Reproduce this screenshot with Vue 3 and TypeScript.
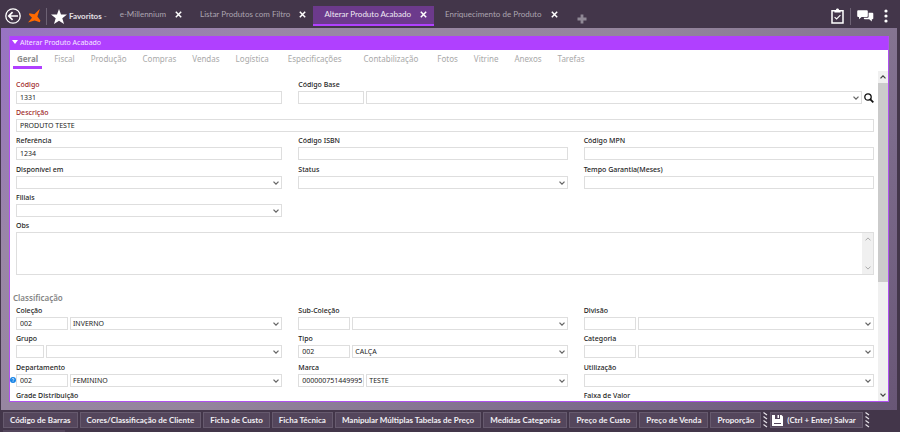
<script setup lang="ts">
import { ref } from 'vue'

interface Field {
  id: string
  label: string
  kind: 'text' | 'select' | 'lookup'
  value?: string
  code?: string
  size?: 'small' | 'medium' | 'large' | 'base'
  required?: boolean
  help?: boolean
  search?: boolean
  span?: 'two' | 'all' | 'break'
}

const openTabs = ['e-Millennium', 'Listar Produtos com Filtro', 'Alterar Produto Acabado', 'Enriquecimento de Produto']
const activeTab = ref('Alterar Produto Acabado')

const sections = [
  { name: 'Geral' },
  { name: 'Fiscal' },
  { name: 'Produção' },
  { name: 'Compras' },
  { name: 'Vendas' },
  { name: 'Logística' },
  { name: 'Especificações', wide: true },
  { name: 'Contabilização', wide: true },
  { name: 'Fotos' },
  { name: 'Vitrine' },
  { name: 'Anexos' },
  { name: 'Tarefas' },
]
const activeSection = ref('Geral')

const general: Field[] = [
  { id: 'codigo', label: 'Código', kind: 'text', value: '1331', required: true },
  { id: 'codigo-base', label: 'Código Base', kind: 'lookup', code: '', value: '', size: 'base', search: true, span: 'two' },
  { id: 'descricao', label: 'Descrição', kind: 'text', value: 'PRODUTO TESTE', required: true, span: 'all' },
  { id: 'referencia', label: 'Referência', kind: 'text', value: '1234' },
  { id: 'isbn', label: 'Código ISBN', kind: 'text', value: '' },
  { id: 'mpn', label: 'Código MPN', kind: 'text', value: '' },
  { id: 'disponivel', label: 'Disponível em', kind: 'select', value: '' },
  { id: 'status', label: 'Status', kind: 'select', value: '' },
  { id: 'garantia', label: 'Tempo Garantia(Meses)', kind: 'text', value: '' },
  { id: 'filiais', label: 'Filiais', kind: 'select', value: '', span: 'break' },
]

const classification: Field[] = [
  { id: 'colecao', label: 'Coleção', kind: 'lookup', code: '002', value: 'INVERNO', size: 'medium' },
  { id: 'subcolecao', label: 'Sub-Coleção', kind: 'lookup', code: '', value: '', size: 'medium' },
  { id: 'divisao', label: 'Divisão', kind: 'lookup', code: '', value: '', size: 'medium' },
  { id: 'grupo', label: 'Grupo', kind: 'lookup', code: '', value: '', size: 'small' },
  { id: 'tipo', label: 'Tipo', kind: 'lookup', code: '002', value: 'CALÇA', size: 'medium' },
  { id: 'categoria', label: 'Categoria', kind: 'lookup', code: '', value: '', size: 'medium' },
  { id: 'departamento', label: 'Departamento', kind: 'lookup', code: '002', value: 'FEMININO', size: 'medium', help: true },
  { id: 'marca', label: 'Marca', kind: 'lookup', code: '000000751449995', value: 'TESTE', size: 'large' },
  { id: 'utilizacao', label: 'Utilização', kind: 'select', value: '' },
  { id: 'grade', label: 'Grade Distribuição', kind: 'select', value: '', span: 'two' },
  { id: 'faixa', label: 'Faixa de Valor', kind: 'select', value: '' },
]

const groups = [
  { name: 'geral', fields: general },
  { name: 'classificacao', title: 'Classificação', fields: classification },
]

const actions = [
  'Código de Barras',
  'Cores/Classificação de Cliente',
  'Ficha de Custo',
  'Ficha Técnica',
  'Manipular Múltiplas Tabelas de Preço',
  'Medidas Categorias',
  'Preço de Custo',
  'Preço de Venda',
  'Proporção',
]
</script>

<template>
  <div class="app">
    <header class="topbar">
      <button class="icon-btn back" aria-label="Voltar">
        <svg width="16" height="16" viewBox="0 0 16 16" fill="none" stroke="#fff">
          <circle cx="8" cy="8" r="7.2" stroke-width="1.3" />
          <path d="M13 8H4M7.6 4.2 3.8 8l3.8 3.8" stroke-width="1.7" />
        </svg>
      </button>
      <svg class="logo" width="13" height="14" viewBox="0 0 13 14" fill="#ff6a00">
        <path d="M11.8 0 9.4 7.4 12.4 11.4 11.8 13.2 6.6 11.4 0 13.5 4 8.8 1 5.8 1.4 4.2 6.4 5.2Z" />
      </svg>
      <span class="divider"></span>
      <button class="favorites">
        <svg width="16" height="15" viewBox="0 0 16 15" fill="#fff">
          <path d="M8 0 10 5.4 16 5.6 11.3 9.2 13 15 8 11.7 3 15 4.7 9.2 0 5.6 6 5.4Z" />
        </svg>
        <span>Favoritos <i>-</i></span>
      </button>
      <nav class="tabs">
        <div v-for="tab in openTabs" :key="tab" class="tab" :class="{ active: tab === activeTab }">
          <button class="tab-name" @click="activeTab = tab">{{ tab }}</button>
          <button class="icon-btn" :aria-label="'Fechar ' + tab">
            <svg width="7" height="7" viewBox="0 0 7 7" stroke="#fff" stroke-width="1.5">
              <path d="M.8.8 6.2 6.2M6.2.8.8 6.2" />
            </svg>
          </button>
        </div>
      </nav>
      <button class="icon-btn add" aria-label="Nova aba">
        <svg width="10" height="10" viewBox="0 0 10 10" fill="#8f8895">
          <path d="M3.6 0.5h2.8v3.1h3.1v2.8H6.4v3.1H3.6V6.4H.5V3.6h3.1Z" />
        </svg>
      </button>
      <div class="tools">
        <button class="icon-btn" aria-label="Tarefas">
          <svg width="13" height="16" viewBox="0 0 13 16" fill="none" stroke="#fff">
            <path d="M1 2.7h11v12.2H1Z" stroke-width="1.5" />
            <path d="M3.4 4.6V2.4h1.5C4.9-.2 8.1-.2 8.1 2.4h1.5v2.2Z" fill="#fff" stroke="none" />
            <path d="M3.6 9.2 5.6 11 9.4 7.2" stroke-width="1.1" />
          </svg>
        </button>
        <span class="divider"></span>
        <button class="icon-btn" aria-label="Mensagens">
          <svg width="17" height="12" viewBox="0 0 17 12" fill="#fff">
            <path d="M1.2.3h8.6q1 0 1 1V6q0 1-1 1H4.6L2 9.2V7H1.2q-1 0-1-1V1.3q0-1 1-1Z" />
            <path d="M11.6 2.8h3.7q1 0 1 1v4.5q0 1-1 1h-.5v2.2L12.2 9.3H7.8q-1 0-1-1V7.8h3.800q1 0 1-1Z" />
          </svg>
        </button>
        <button class="icon-btn" aria-label="Mais opções">
          <svg width="4" height="14" viewBox="0 0 4 14" fill="#fff">
            <circle cx="2" cy="2" r="1.6" />
            <circle cx="2" cy="7" r="1.6" />
            <circle cx="2" cy="12" r="1.6" />
          </svg>
        </button>
      </div>
    </header>

    <main class="workspace">
      <section class="window">
        <h1 class="window-title">
          <svg width="6" height="4" viewBox="0 0 6 4" fill="#fff"><path d="M0 0h6L3 4Z" /></svg>
          Alterar Produto Acabado
        </h1>
        <nav class="sections">
          <button
            v-for="section in sections"
            :key="section.name"
            :class="{ current: section.name === activeSection, wide: section.wide }"
            @click="activeSection = section.name"
          >
            {{ section.name }}
          </button>
        </nav>

        <div class="body">
          <form class="form" @submit.prevent>
            <template v-for="group in groups" :key="group.name">
              <h2 v-if="group.title" class="group-title">{{ group.title }}</h2>
              <div class="fields" :class="group.name">
                <div v-for="field in group.fields" :key="field.id" class="field" :class="field.span">
                  <label :for="field.id" :class="{ required: field.required }">{{ field.label }}</label>
                  <div class="control">
                    <svg v-if="field.help" class="help" width="6" height="6" viewBox="0 0 6 6">
                      <circle cx="3" cy="3" r="3" fill="#1583e6" />
                      <path d="M2 2.3Q2.1 1.4 3 1.4T4 2.3Q3.9 2.9 3 3.2V3.7M3 4.3v.7" fill="none" stroke="#fff" stroke-width=".7" />
                    </svg>
                    <input v-if="field.kind === 'text'" :id="field.id" type="text" :value="field.value" />
                    <template v-else>
                      <input
                        v-if="field.kind === 'lookup'"
                        :id="field.id"
                        type="text"
                        class="code"
                        :class="field.size"
                        :value="field.code"
                      />
                      <div class="combo">
                        <select
                          :id="field.kind === 'select' ? field.id : field.id + '-nome'"
                          :aria-label="field.label"
                        >
                          <option>{{ field.value }}</option>
                        </select>
                        <svg width="6" height="4" viewBox="0 0 6 4" fill="none" stroke="#666" stroke-width="1.3">
                          <path d="M.5.6 3 3.1 5.5.6" />
                        </svg>
                      </div>
                    </template>
                    <button v-if="field.search" type="button" class="icon-btn search" aria-label="Pesquisar">
                      <svg width="10" height="10" viewBox="0 0 10 10" fill="none" stroke="#111">
                        <circle cx="4" cy="4" r="3.2" stroke-width="1.3" />
                        <path d="M6.3 6.3 9.3 9.3" stroke-width="1.8" />
                      </svg>
                    </button>
                  </div>
                </div>
              </div>
              <div v-if="group.name === 'geral'" class="field notes">
                <label for="obs">Obs</label>
                <div class="notes-box">
                  <textarea id="obs"></textarea>
                  <div class="notes-bar">
                    <svg width="6" height="4" viewBox="0 0 6 4" fill="none" stroke="#aaa"><path d="M.5 3.4 3 .9 5.5 3.4" /></svg>
                    <svg width="6" height="4" viewBox="0 0 6 4" fill="none" stroke="#aaa"><path d="M.5.6 3 3.1 5.5.6" /></svg>
                  </div>
                </div>
              </div>
            </template>
          </form>
          <div class="scrollbar">
            <svg width="6" height="4" viewBox="0 0 6 4" fill="none" stroke="#444" stroke-width="1.3"><path d="M.5 3.4 3 .9 5.5 3.4" /></svg>
            <div class="track"><div class="thumb"></div></div>
            <svg width="6" height="4" viewBox="0 0 6 4" fill="none" stroke="#444" stroke-width="1.3"><path d="M.5.6 3 3.1 5.5.6" /></svg>
          </div>
        </div>
      </section>
    </main>

    <footer class="actions">
      <div class="action-row">
        <button v-for="action in actions" :key="action">{{ action }}</button>
        <svg class="grip" width="5" height="16" viewBox="0 0 5 16" stroke="#e6e2e8" fill="none">
          <path d="M.5.5l3.5 2.5M.5 4.5l3.5 2.5M.5 8.5l3.5 2.5M.5 12.5l3.5 2.5" stroke-width="1.2" />
        </svg>
        <button class="save">
          <svg width="11" height="11" viewBox="0 0 11 11" fill="#fff">
            <path d="M0 0h3v4h5V0h1.5L11 1.5V11H0Z" />
            <path d="M5.5 0H7v3H5.5Z" />
            <path d="M2 8.5h7" stroke="#54465c" />
          </svg>
          (Ctrl + Enter) Salvar
        </button>
        <svg class="grip" width="5" height="16" viewBox="0 0 5 16" stroke="#e6e2e8" fill="none">
          <path d="M.5.5l3.5 2.5M.5 4.5l3.5 2.5M.5 8.5l3.5 2.5M.5 12.5l3.5 2.5" stroke-width="1.2" />
        </svg>
      </div>
      <div class="next-row"></div>
    </footer>
  </div>
</template>

<style>
body {
  margin: 0;
  background: #43364a;
}
</style>

<style scoped>
.app {
  display: flex;
  flex-direction: column;
  height: 100vh;
  overflow: hidden;
  background: #43364a;
  font-family: 'Noto Sans', 'Open Sans', sans-serif;
  font-size: 7px;
  color: #1c1c1c;
}
.app * {
  box-sizing: border-box;
}
button,
input,
select,
textarea {
  font: inherit;
  color: inherit;
  margin: 0;
  padding: 0;
  border: 0;
  border-radius: 0;
  background: none;
  outline: none;
}
button {
  cursor: pointer;
  white-space: nowrap;
}
svg {
  display: block;
  flex: none;
}
.icon-btn {
  flex: none;
}

.topbar {
  flex: none;
  display: flex;
  align-items: center;
  height: 28px;
  padding: 4px 12px 0 5px;
  font-family: Lato, 'Noto Sans', sans-serif;
  font-size: 8px;
}
.logo {
  margin: 0 5px 0 7px;
}
.divider {
  flex: none;
  width: 1px;
  height: 17px;
  background: #6d6274;
}
.favorites {
  display: flex;
  align-items: center;
  gap: 2px;
  margin-left: 4px;
  font-weight: 700;
  color: #e4e0e6;
}
.favorites i {
  font-style: normal;
  color: #8f8895;
}
.tabs {
  display: flex;
  align-items: center;
  margin-left: 2px;
}
.tab {
  display: flex;
  align-items: center;
  gap: 9px;
  height: 20px;
  padding: 0 7px 2px 11px;
  border-bottom: 2px solid transparent;
  color: #aca5b0;
}
.tab.active {
  background: #6c3a8c;
  border-bottom-color: #b040ff;
  color: #f0eaf4;
}
.add {
  margin: 5px 0 0 12px;
}
.tools {
  display: flex;
  align-items: center;
  gap: 6px;
  margin-left: auto;
}
.tools .icon-btn:last-child {
  margin-left: 4px;
}

.workspace {
  flex: 1;
  min-height: 0;
  display: flex;
  margin: 0 3px 0 1px;
  padding: 8px;
  background: linear-gradient(140deg, #9873c4 0%, #9a87a6 20%, #94859c 48%, #7d6c8c 75%, #685676 100%);
}
.window {
  flex: 1;
  min-width: 0;
  display: flex;
  flex-direction: column;
  border: 1px solid #b050f0;
  border-top: 0;
  background: #fff;
}
.window-title {
  flex: none;
  display: flex;
  align-items: center;
  gap: 2px;
  height: 14px;
  margin: 0;
  padding: 0 2px 2px;
  background: #b040ff;
  color: #f6eaff;
  font-size: 7px;
  font-weight: 400;
}
.sections {
  flex: none;
  display: flex;
  height: 21px;
  padding: 0 3px;
  gap: 8px;
  font-size: 8px;
}
.sections button {
  height: 19px;
  padding: 0 4px;
  border-bottom: 3px solid transparent;
  color: #a9a9a9;
}
.sections .wide {
  padding: 0 7px;
}
.sections .current {
  border-bottom-color: #b040ff;
  color: #8c8c8c;
  font-weight: 700;
}

.body {
  flex: 1;
  min-height: 0;
  display: flex;
}
.form {
  flex: 1;
  min-width: 0;
  overflow: hidden;
  padding: 5px 4px 0 6px;
}
.fields {
  display: grid;
  grid-template-columns: 266fr 269fr 290fr;
  grid-template-rows: 28px 28px 29px 28px 28px;
  column-gap: 16px;
}
.classificacao {
  grid-template-rows: 28px 29px 28px 28px;
}
.field {
  min-width: 0;
}
.field.two {
  grid-column: span 2;
}
.field.all,
.field.break {
  grid-column: 1 / -1;
}
.field.break .control {
  width: calc((100% - 32px) * 266 / 825);
}
label {
  display: block;
  width: max-content;
  height: 15px;
  line-height: 17px;
  font-weight: 500;
}
label.required {
  color: #a02828;
}
.control {
  position: relative;
  display: flex;
  gap: 2px;
  height: 13px;
}
input,
select,
.notes-box {
  border: 1px solid #dedede;
  background: #fff;
}
input,
select {
  width: 100%;
  min-width: 0;
  height: 13px;
  padding: 0 3px;
  line-height: 11px;
}
.code {
  flex: none;
}
.small {
  width: 28px;
}
.medium {
  width: 52px;
}
.large,
.base {
  width: 66px;
  padding-right: 0;
}
.combo {
  flex: 1;
  min-width: 0;
  display: grid;
  align-items: center;
}
.combo > * {
  grid-area: 1 / 1;
}
.combo select {
  appearance: none;
  padding: 0 12px 0 2px;
}
.combo svg {
  justify-self: end;
  margin-right: 3px;
  pointer-events: none;
}
.search {
  width: 10px;
}
.help {
  position: absolute;
  left: -6px;
  top: 3px;
}
.notes-box {
  display: flex;
  height: 43px;
}
.notes-box textarea {
  flex: 1;
  resize: none;
  padding: 2px 3px;
}
.notes-bar {
  display: flex;
  flex-direction: column;
  justify-content: space-between;
  align-items: center;
  width: 11px;
  padding: 4px 0;
  background: #f0f0f0;
}
.group-title {
  margin: 16px 0 0 -3px;
  height: 11px;
  line-height: 13px;
  font-size: 8px;
  font-weight: 600;
  color: #858585;
}

.scrollbar {
  flex: none;
  display: flex;
  flex-direction: column;
  align-items: center;
  width: 10px;
  padding: 4px 0;
  gap: 4px;
  background: #f0f0f0;
}
.track {
  flex: 1;
  width: 100%;
}
.thumb {
  height: 65%;
  background: #cbcbcb;
}

.actions {
  flex: none;
  height: 22px;
  padding: 2px 3px 0;
  overflow: hidden;
  font-family: Lato, 'Noto Sans', sans-serif;
  font-size: 8px;
}
.action-row {
  display: flex;
  gap: 2px;
}
.action-row button {
  height: 16px;
  padding: 0 6px;
  border: 1px solid #665a6e;
  background: #54465c;
  color: #f2f0f4;
  font-weight: 700;
}
.action-row .save {
  display: flex;
  align-items: center;
  gap: 4px;
  padding: 0 6px 0 1px;
}
.next-row {
  width: 62px;
  height: 4px;
  margin-top: 2px;
  background: #54465c;
}
</style>
